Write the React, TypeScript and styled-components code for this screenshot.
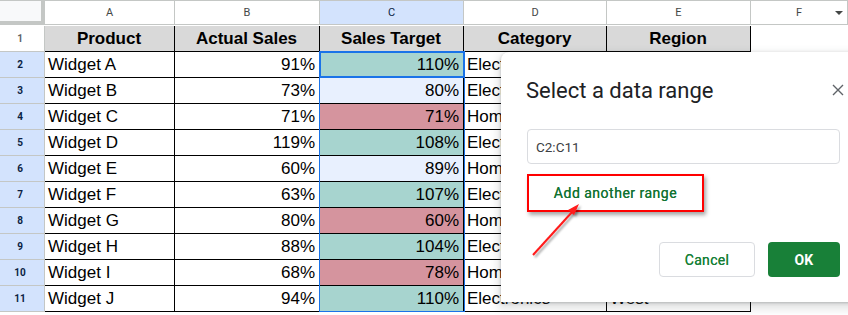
import styled, { createGlobalStyle } from "styled-components";

const GlobalStyle = createGlobalStyle`
  html, body {
    margin: 0;
    padding: 0;
    background: #ffffff;
    overflow: hidden;
  }
  * { box-sizing: border-box; }
`;

type Fill = "teal" | "red" | "none";

interface IRow {
  product: string;
  actual: string;
  target: string;
  fill: Fill;
  category: string;
  region: string;
}

const rows: IRow[] = [
  { product: "Widget A", actual: "91%", target: "110%", fill: "teal", category: "Electronics", region: "North" },
  { product: "Widget B", actual: "73%", target: "80%", fill: "none", category: "Electronics", region: "South" },
  { product: "Widget C", actual: "71%", target: "71%", fill: "red", category: "Home", region: "East" },
  { product: "Widget D", actual: "119%", target: "108%", fill: "teal", category: "Electronics", region: "West" },
  { product: "Widget E", actual: "60%", target: "89%", fill: "none", category: "Home", region: "North" },
  { product: "Widget F", actual: "63%", target: "107%", fill: "teal", category: "Electronics", region: "South" },
  { product: "Widget G", actual: "80%", target: "60%", fill: "red", category: "Home", region: "East" },
  { product: "Widget H", actual: "88%", target: "104%", fill: "teal", category: "Electronics", region: "North" },
  { product: "Widget I", actual: "68%", target: "78%", fill: "red", category: "Home", region: "South" },
  { product: "Widget J", actual: "94%", target: "110%", fill: "teal", category: "Electronics", region: "West" },
];

const columns = ["A", "B", "C", "D", "E", "F"];
const fillColor: Record<Fill, string> = {
  teal: "#a7d4cf",
  red: "#d5949e",
  none: "#e8f0fe",
};

const App = () => {
  return (
    <>
      <GlobalStyle />
      <Page>
        <Sheet>
          <Corner />
          {columns.map((c) => (
            <ColHeader key={c} $selected={c === "C"}>
              {c}
              {c === "F" && <ColMenu />}
            </ColHeader>
          ))}

          <RowHeader $selected={false}>1</RowHeader>
          <HeadCell>Product</HeadCell>
          <HeadCell>Actual Sales</HeadCell>
          <HeadCell>Sales Target</HeadCell>
          <HeadCell>Category</HeadCell>
          <HeadCell>Region</HeadCell>
          <EmptyCell />

          {rows.map((r, i) => (
            <Row key={r.product} r={r} n={i + 2} />
          ))}
        </Sheet>

        <RangeOutline />
        <ActiveCell />

        <Dialog>
          <DialogHeader>
            <DialogTitle>Select a data range</DialogTitle>
            <CloseButton aria-label="Close">
              <svg width="12" height="12" viewBox="0 0 12 12">
                <path d="M1 1L11 11M11 1L1 11" stroke="#5f6368" strokeWidth="1.4" />
              </svg>
            </CloseButton>
          </DialogHeader>
          <RangeInput>C2:C11</RangeInput>
          <AddRange>Add another range</AddRange>
          <Footer>
            <CancelButton>Cancel</CancelButton>
            <OkButton>OK</OkButton>
          </Footer>
        </Dialog>

        <Arrow width="70" height="70" viewBox="0 0 70 70">
          <defs>
            <filter id="sh" x="-20%" y="-20%" width="150%" height="150%">
              <feDropShadow dx="2" dy="2" stdDeviation="1.2" floodColor="#000" floodOpacity="0.35" />
            </filter>
          </defs>
          <g filter="url(#sh)">
            <line x1="5" y1="60" x2="45" y2="16" stroke="#ff1a1a" strokeWidth="2" />
            <polygon points="51,9 40,15 46,20" fill="#ff1a1a" />
          </g>
        </Arrow>
      </Page>
    </>
  );
};

const Row = ({ r, n }: { r: IRow; n: number }) => (
  <>
    <RowHeader $selected>{n}</RowHeader>
    <Cell>{r.product}</Cell>
    <Cell $right>{r.actual}</Cell>
    <Cell $right style={{ background: fillColor[r.fill] }}>
      {r.target}
    </Cell>
    <Cell>{r.category}</Cell>
    <Cell>{r.region}</Cell>
    <EmptyCell />
  </>
);

export default App;

const Page = styled.div`
  position: relative;
  width: 848px;
  height: 315px;
  overflow: hidden;
  background: #fff;
`;

const Sheet = styled.div`
  display: grid;
  grid-template-columns: 45px 130px 145px 144px 143px 144px 97px;
  grid-template-rows: 25px repeat(11, 26px);
  border-top: 1px solid #c4c7c5;
`;

const Corner = styled.div`
  height: 24px;
  background: #f8f9fa;
  border-right: 4px solid #c4c7c5;
  border-bottom: 4px solid #c4c7c5;
`;

const ColHeader = styled.div<{ $selected: boolean }>`
  position: relative;
  height: 24px;
  display: flex;
  align-items: center;
  justify-content: center;
  font-family: Roboto, "Liberation Sans", sans-serif;
  font-size: 11px;
  color: ${({ $selected }) => ($selected ? "#0b1f44" : "#444746")};
  background: ${({ $selected }) => ($selected ? "#d3e3fd" : "#ffffff")};
  border-right: 1px solid #c4c7c5;
  border-bottom: 1px solid #c4c7c5;
`;

const ColMenu = styled.span`
  position: absolute;
  right: 4px;
  top: 10px;
  width: 0;
  height: 0;
  border-left: 4px solid transparent;
  border-right: 4px solid transparent;
  border-top: 4px solid #444746;
`;

const RowHeader = styled.div<{ $selected: boolean }>`
  display: flex;
  align-items: center;
  justify-content: center;
  padding-right: 4px;
  font-family: Roboto, "Liberation Sans", sans-serif;
  font-size: 10px;
  font-weight: 700;
  color: ${({ $selected }) => ($selected ? "#0b1f44" : "#5f6368")};
  background: ${({ $selected }) => ($selected ? "#d3e3fd" : "#ffffff")};
  border-right: 1px solid #c4c7c5;
  border-bottom: 1px solid #c4c7c5;
`;

const Cell = styled.div<{ $right?: boolean }>`
  display: flex;
  align-items: center;
  justify-content: ${({ $right }) => ($right ? "flex-end" : "flex-start")};
  padding: 1px 4px 0 3px;
  font-family: "Liberation Sans", Arial, sans-serif;
  font-size: 17px;
  color: #000;
  white-space: nowrap;
  overflow: hidden;
  border-right: 1px solid #000;
  border-bottom: 1px solid #000;
`;

const HeadCell = styled(Cell)`
  justify-content: center;
  font-weight: 700;
  background: #d9d9d9;
`;

const EmptyCell = styled.div`
  background: #fff;
`;

const RangeOutline = styled.div`
  position: absolute;
  left: 319px;
  top: 51px;
  width: 146px;
  height: 261px;
  border: 1px solid #1a73e8;
  pointer-events: none;
`;

const ActiveCell = styled.div`
  position: absolute;
  left: 319px;
  top: 51px;
  width: 146px;
  height: 27px;
  border: 2px solid #1a73e8;
  pointer-events: none;
`;

const Dialog = styled.div`
  position: absolute;
  left: 501px;
  top: 52px;
  width: 363px;
  height: 250px;
  background: #fff;
  border-radius: 8px 0 0 0;
  box-shadow: 0 4px 8px 3px rgba(60, 64, 67, 0.15), 0 1px 3px rgba(60, 64, 67, 0.3);
  padding: 24px 24px 0 26px;
  display: flex;
  flex-direction: column;
`;

const DialogHeader = styled.div`
  display: flex;
  align-items: center;
  justify-content: space-between;
  height: 28px;
`;

const DialogTitle = styled.h2`
  margin: 0 0 0 -1px;
  font-family: Roboto, "Open Sans", sans-serif;
  font-weight: 400;
  font-size: 22px;
  color: #202124;
`;

const CloseButton = styled.div`
  display: flex;
  align-items: center;
  justify-content: center;
  width: 20px;
  height: 20px;
  margin-right: -8px;
`;

const RangeInput = styled.div`
  margin-top: 25px;
  height: 35px;
  border: 1px solid #dadce0;
  border-radius: 4px;
  display: flex;
  align-items: center;
  padding-left: 8px;
  font-family: Roboto, "Liberation Sans", sans-serif;
  font-size: 13.5px;
  color: #3c4043;
`;

const AddRange = styled.div`
  margin-top: 10px;
  width: 177px;
  height: 38px;
  border: 2px solid #ff0000;
  box-shadow: 2px 3px 4px rgba(0, 0, 0, 0.35);
  display: flex;
  align-items: center;
  justify-content: center;
  font-family: Roboto, "Open Sans", sans-serif;
  font-size: 14px;
  font-weight: 400;
  letter-spacing: 0.5px;
  color: #137333;
  text-shadow: 0 0 0.4px #137333;
`;

const Footer = styled.div`
  margin-top: 30px;
  display: flex;
  justify-content: flex-end;
  gap: 13px;
`;

const BaseButton = styled.div`
  height: 35px;
  border-radius: 4px;
  display: flex;
  align-items: center;
  justify-content: center;
  font-family: Roboto, "Open Sans", sans-serif;
  font-size: 14px;
  letter-spacing: 0.3px;
`;

const CancelButton = styled(BaseButton)`
  width: 96px;
  border: 1px solid #dadce0;
  color: #188038;
  font-weight: 400;
  text-shadow: 0 0 0.4px #188038;
`;

const OkButton = styled(BaseButton)`
  width: 72px;
  background: #188038;
  color: #fff;
  font-weight: 700;
`;

const Arrow = styled.svg`
  position: absolute;
  left: 528px;
  top: 195px;
  overflow: visible;
`;
